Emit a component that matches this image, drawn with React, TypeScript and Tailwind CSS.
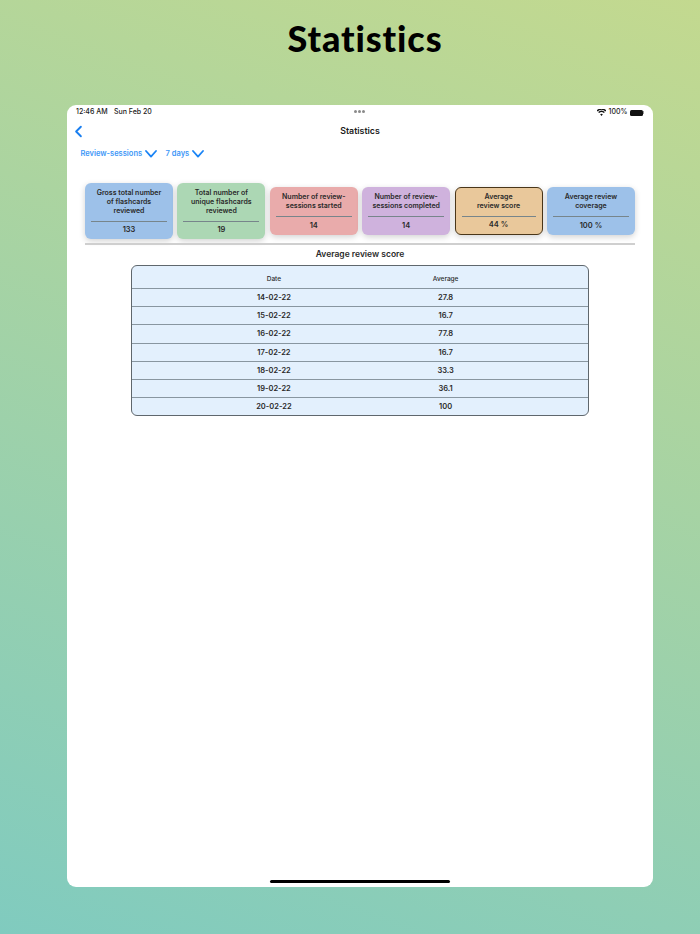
import { ChevronLeft } from 'lucide-react';

const font = "font-['Inter',sans-serif]";

const cards = [
  { title: ['Gross total number', 'of flashcards', 'reviewed'], value: '133', bg: 'bg-[#9dc1e9]', tall: true },
  { title: ['Total number of', 'unique flashcards', 'reviewed'], value: '19', bg: 'bg-[#acd7b4]', tall: true },
  { title: ['Number of review-', 'sessions started'], value: '14', bg: 'bg-[#e9abab]' },
  { title: ['Number of review-', 'sessions completed'], value: '14', bg: 'bg-[#cfb2dd]' },
  { title: ['Average', 'review score'], value: '44 %', bg: 'bg-[#e9c89b]', active: true },
  { title: ['Average review', 'coverage'], value: '100 %', bg: 'bg-[#9dc1e9]' },
];

const rows = [
  ['14-02-22', '27.8'],
  ['15-02-22', '16.7'],
  ['16-02-22', '77.8'],
  ['17-02-22', '16.7'],
  ['18-02-22', '33.3'],
  ['19-02-22', '36.1'],
  ['20-02-22', '100'],
];

function Chevron() {
  return (
    <svg width="12" height="8" viewBox="0 0 12 8" fill="none" className="ml-[2.5px]">
      <path d="M1 1l5 5.6L11 1" stroke="#1a84f5" strokeWidth="1.8" strokeLinecap="round" strokeLinejoin="round" />
    </svg>
  );
}

function Card({ title, value, bg, tall, active }: { title: string[]; value: string; bg: string; tall?: boolean; active?: boolean }) {
  return (
    <div
      className={`w-[88px] rounded-[6px] px-[6px] flex flex-col shadow-[0_2px_6px_rgba(0,0,0,0.18)] ${bg} ${tall ? 'h-[56px]' : 'h-[48px]'} ${active ? 'border-[1.5px] border-[#4a3619]' : ''}`}
    >
      <div className={`text-center text-[7px] leading-[9px] font-semibold text-[#2a2a2a] ${active ? 'pt-[4px] h-[28px]' : 'pt-[5px]'} ${tall ? 'h-[38px]' : active ? '' : 'h-[29px]'}`}>
        {title.map((line) => (
          <div key={line}>{line}</div>
        ))}
      </div>
      <div className="h-px bg-[#77858b]" />
      <div className="flex-1 flex items-center justify-center pb-[1px] text-[7.5px] font-semibold text-[#2a2a2a]">{value}</div>
    </div>
  );
}

export default function App() {
  return (
    <div className={`${font} w-[700px] h-[934px] overflow-hidden flex flex-col bg-[linear-gradient(20deg,#80cbbf,#c3d98f)]`}>
      <div className="h-[105px] shrink-0 pt-[16px] pl-[30px] text-center text-[36px] leading-[44px] tracking-[0.9px] [font-variant-ligatures:none] font-black text-black font-['Lato',sans-serif]">
        Statistics
      </div>

      <div className="ml-[67px] mr-[47px] h-[782px] bg-white rounded-[9px] flex flex-col">
        {/* status bar */}
        <div className="h-[13px] mt-[1px] px-[9px] flex items-center justify-between text-[7px] text-[#222] font-medium relative">
          <div className="flex gap-[6.5px]">
            <span>12:46 AM</span>
            <span>Sun Feb 20</span>
          </div>
          <div className="absolute left-[287px] top-[4px] flex gap-[1.5px]">
            <span className="w-[2.5px] h-[2.5px] rounded-full bg-[#8a8a8a]" />
            <span className="w-[2.5px] h-[2.5px] rounded-full bg-[#8a8a8a]" />
            <span className="w-[2.5px] h-[2.5px] rounded-full bg-[#8a8a8a]" />
          </div>
          <div className="flex items-center gap-[2.5px]">
            <svg width="9" height="7" viewBox="0 0 24 18">
              <path d="M12 18l-3.6-4.2a5.4 5.4 0 017.2 0zM5.6 10.600L3 7.800a13.400 13.400 0 0118 0l-2.600 2.800a9.600 9.600 0 00-12.800 0zM1.400 6L-1 3.400a18.600 18.600 0 0126 0L22.600 6a15.400 15.400 0 00-21.200 0z" fill="#111" />
            </svg>
            <span>100%</span>
            <span className="flex items-center">
              <span className="w-[13px] h-[6px] rounded-[1.5px] bg-[#111]" />
              <span className="w-px h-[2.5px] bg-[#999]" />
            </span>
          </div>
        </div>

        {/* nav */}
        <div className="h-[24px] relative flex items-center justify-center text-[8.8px] font-semibold text-[#1b1b1b]">
          <ChevronLeft className="absolute left-[2px] top-[3px] text-[#1a7ff0]" size={19} strokeWidth={2.4} />
          Statistics
        </div>

        {/* filters */}
        <div className="mt-[4px] pl-[13.5px] h-[14px] flex items-center text-[7.5px] font-semibold text-[#3d97f7]">
          <span>Review-sessions</span>
          <Chevron />
          <span className="ml-[9px]">7 days</span>
          <Chevron />
        </div>

        {/* cards */}
        <div className="mt-[22px] mx-[18px] h-[56px] flex items-center justify-between">
          {cards.map((c) => (
            <Card key={c.title.join()} {...c} />
          ))}
        </div>

        <div className="mt-[4px] mx-[18px] h-[1.5px] bg-[#cfcfcf]" />

        <div className="h-[19px] flex items-center justify-center text-[8.5px] font-semibold text-[#2a2a2a]">Average review score</div>

        {/* table */}
        <div className="mt-[1.5px] ml-[64px] mr-[64.5px] rounded-[6px] border border-[#5f676d] bg-[#e3f0fd] text-[#2a2a2a] overflow-hidden">
          <div className="h-[22px] pt-[5px] px-[56px] grid grid-cols-2 items-center text-center text-[6.5px] font-medium">
            <span>Date</span>
            <span>Average</span>
          </div>
          {rows.map(([date, avg]) => (
            <div key={date} className="h-[18.2px] px-[56px] border-t border-[#8896a0] grid grid-cols-2 items-center text-center text-[7.5px] font-semibold">
              <span>{date}</span>
              <span>{avg}</span>
            </div>
          ))}
        </div>

        <div className="mt-auto mb-[4px] mx-auto w-[180px] h-[3px] rounded-full bg-black" />
      </div>
    </div>
  );
}
